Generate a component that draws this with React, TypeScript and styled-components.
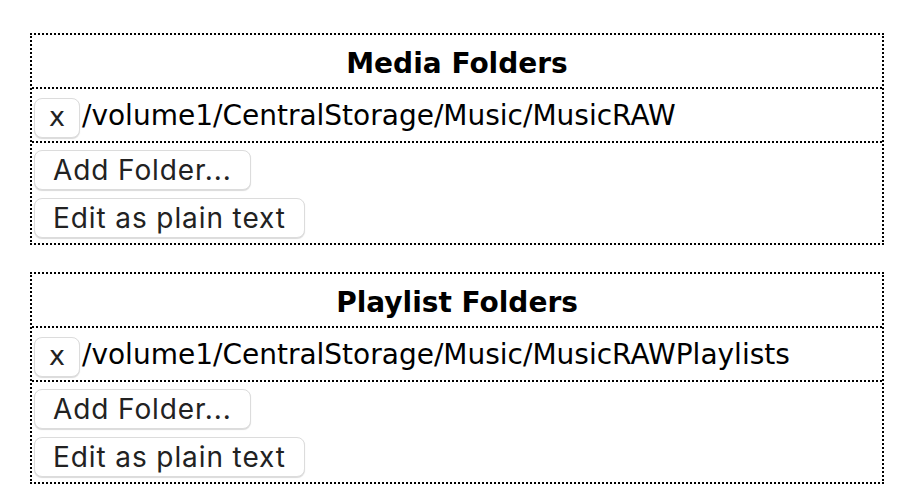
import React from 'react';
import styled, { createGlobalStyle } from 'styled-components';

type FolderSection = {
  title: string;
  folders: string[];
};

const sections: FolderSection[] = [
  {
    title: 'Media Folders',
    folders: ['/volume1/CentralStorage/Music/MusicRAW'],
  },
  {
    title: 'Playlist Folders',
    folders: ['/volume1/CentralStorage/Music/MusicRAWPlaylists'],
  },
];

const GlobalStyle = createGlobalStyle`
  html, body {
    margin: 0;
    padding: 0;
    background: #ffffff;
  }

  body {
    font-family: 'DejaVu Sans', Verdana, sans-serif;
    color: #000000;
  }
`;

const App = () => {
  return (
    <>
      <GlobalStyle />
      <S.Page>
        {sections.map((section) => (
          <S.Section key={section.title}>
            <S.Header>{section.title}</S.Header>
            {section.folders.map((folder) => (
              <S.FolderRow key={folder}>
                <S.RemoveButton>x</S.RemoveButton>
                <S.Path>{folder}</S.Path>
              </S.FolderRow>
            ))}
            <S.Actions>
              <S.ActionButton>Add Folder...</S.ActionButton>
              <S.ActionButton>Edit as plain text</S.ActionButton>
            </S.Actions>
          </S.Section>
        ))}
      </S.Page>
    </>
  );
};

export default App;

const S = {
  Page: styled.div`
    display: flex;
    flex-direction: column;
    gap: 27px;

    width: 854px;
    padding: 33px 0 0 30px;
  `,

  Section: styled.div`
    display: flex;
    flex-direction: column;

    border: 2px dotted #000000;
  `,

  Header: styled.div`
    display: flex;
    justify-content: center;
    align-items: center;

    height: 54px;
    padding-top: 4px;
    box-sizing: border-box;
    border-bottom: 2px dotted #000000;

    font-size: 28px;
    font-weight: 700;
  `,

  FolderRow: styled.div`
    display: flex;
    align-items: center;
    gap: 2px;

    height: 52px;
    padding: 0 2px;
    border-bottom: 2px dotted #000000;
  `,

  RemoveButton: styled.button`
    height: 40px;
    padding: 0 14px 4px;
    margin-top: 6px;
    border: 1px solid #dcdcdc;
    border-radius: 8px;
    box-shadow: 0 1px 1px rgba(0, 0, 0, 0.15);

    background: #ffffff;

    font-family: 'DejaVu Sans', Verdana, sans-serif;
    font-size: 27px;
    line-height: 1;
    color: #222222;
  `,

  Path: styled.span`
    font-size: 28px;
  `,

  Actions: styled.div`
    display: flex;
    flex-direction: column;
    align-items: flex-start;
    gap: 8px;

    padding: 7px 2px 5px;
  `,

  ActionButton: styled.button`
    height: 40px;
    padding: 0 18px;
    border: 1px solid #dcdcdc;
    border-radius: 8px;
    box-shadow: 0 1px 1px rgba(0, 0, 0, 0.15);

    background: #ffffff;

    font-family: Inter, 'Liberation Sans', sans-serif;
    font-size: 28px;
    letter-spacing: 0.9px;
    color: #222222;
  `,
};
